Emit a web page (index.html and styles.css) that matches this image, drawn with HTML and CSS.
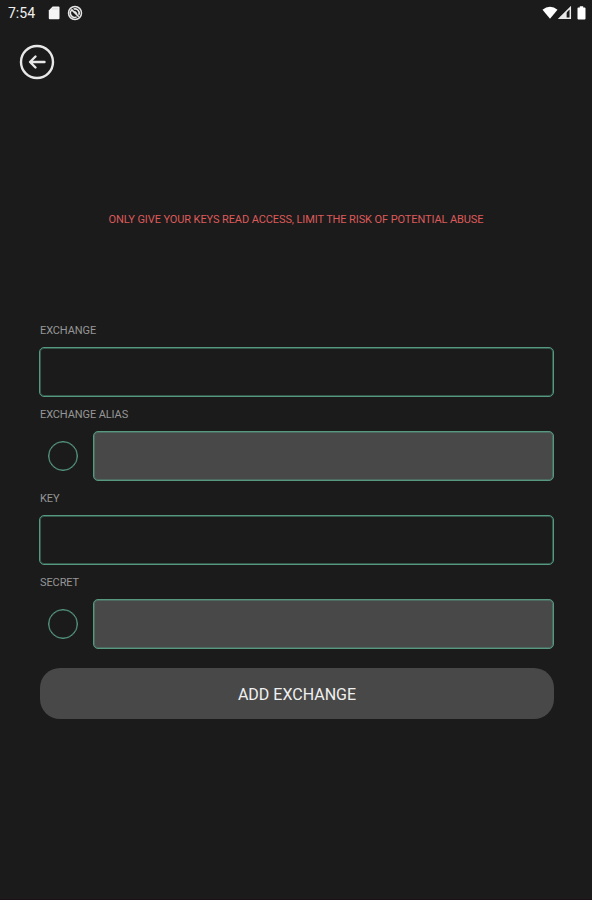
FILE: index.html
```
<!DOCTYPE html>
<html lang="en">

<head>
    <meta charset="UTF-8">
    <meta name="viewport" content="width=device-width, initial-scale=1.0">
    <title>Add Exchange</title>
    <link rel="stylesheet" href="styles.css">
</head>

<body>
    <div class="screen">
        <header class="status">
            <span class="time">7:54</span>
            <!-- sd card -->
            <svg class="sd" width="12" height="14" viewBox="0 0 12 14">
                <path d="M4.6 .5H10.5Q11.5 .5 11.5 1.5V12.2Q11.5 13.2 10.5 13.2H1.8Q.8 13.2 .8 12.2V4.4Z" fill="#f4f4f4" />
                <path d="M5 2v1.500M7 2v1.500M9 2v1.500" stroke="#ccc" stroke-width=".8" />
            </svg>
            <!-- blocked target -->
            <svg class="target" width="16" height="16" viewBox="0 0 16 16" fill="none" stroke="#e6e6e6">
                <circle cx="8" cy="8" r="6.5" stroke-width="1.500" />
                <path d="M4.900 5A4.200 4.200 0 0 0 9.600 11.900M6.600 4.100A4.200 4.200 0 0 1 11.800 9.800" stroke-width="1.600" />
                <path d="M4.400 4.400l7.400 7.400M7.400 6.200l2.500 2.500" stroke-width="1.600" />
            </svg>
            <div class="signals">
                <svg width="16" height="14" viewBox="0 0 16 14">
                    <path d="M8 12.800L.5 3.800Q4 .7 8 .7T15.500 3.800Z" fill="#fff" />
                </svg>
                <svg width="14" height="14" viewBox="0 0 14 14">
                    <path d="M1.600 12.300L12.300 1.600V12.300Z" fill="none" stroke="#e8e8e8" stroke-width="1.500" />
                    <path d="M1 12.600L8.600 5V12.600Z" fill="#e8e8e8" />
                </svg>
                <svg class="battery" width="9" height="14" viewBox="0 0 9 14">
                    <path d="M2.800 .3H6.200V1.600H7.600Q8.500 1.600 8.500 2.500V12.600Q8.500 13.500 7.600 13.500H1.400Q.5 13.500 .5 12.600V2.500Q.5 1.600 1.400 1.600H2.800Z" fill="#fff" />
                </svg>
            </div>
        </header>

        <a class="back" href="javascript:;" aria-label="Back">
            <svg width="36" height="36" viewBox="0 0 36 36" fill="none" stroke="#e8e8e8" stroke-width="2.400" stroke-linecap="round" stroke-linejoin="round">
                <circle cx="18" cy="18" r="16" />
                <path d="M25.500 18H11.200M16.500 12.500L11 18L16.500 23.500" />
            </svg>
        </a>

        <p class="warning">ONLY GIVE YOUR KEYS READ ACCESS, LIMIT THE RISK OF POTENTIAL ABUSE</p>

        <form class="form">
            <label class="label">EXCHANGE</label>
            <div class="row">
                <div class="field"></div>
            </div>
            <label class="label">EXCHANGE ALIAS</label>
            <div class="row">
                <div class="radio"></div>
                <div class="field filled"></div>
            </div>
            <label class="label">KEY</label>
            <div class="row">
                <div class="field"></div>
            </div>
            <label class="label">SECRET</label>
            <div class="row">
                <div class="radio"></div>
                <div class="field filled"></div>
            </div>
            <button class="add" type="button">ADD EXCHANGE</button>
        </form>
    </div>
</body>

</html>
```
FILE: styles.css
```
* {
    margin: 0;
    padding: 0;
    box-sizing: border-box;
}

body {
    background-color: #1b1b1b;
    font-family: Roboto, "Liberation Sans", sans-serif;
}

.screen {
    height: 900px;
    overflow: hidden;
    border-bottom: 1px solid #1a1216;
}

/* status bar */

.status {
    display: flex;
    align-items: center;
    height: 26px;
    padding: 0 6px 0 8px;
}

.time {
    width: 40px;
    color: #f0f0f0;
    font-size: 14px;
}

.target {
    margin-left: 7px;
}

.signals {
    display: flex;
    margin-left: auto;
}

.battery {
    margin-left: 5px;
}

/* back button */

.back {
    display: block;
    width: 36px;
    height: 36px;
    margin: 18px 0 0 19px;
}

.back svg {
    display: block;
}

.warning {
    height: 20px;
    margin-top: 130px;
    color: #dd5a5a;
    font-size: 11px;
    line-height: 20px;
    letter-spacing: -0.1px;
    text-align: center;
    white-space: nowrap;
}

/* form */

.form {
    margin: 83px 38px 0 39px;
}

.label {
    display: block;
    height: 34px;
    padding-left: 1px;
    color: #969696;
    font-size: 11px;
    line-height: 35px;
    letter-spacing: -0.1px;
}

.row {
    display: flex;
    align-items: center;
    height: 50px;
}

.field {
    flex: 1;
    height: 50px;
    border: 1px solid #579880;
    border-radius: 5px;
    box-shadow: inset 0 0 0 1px #33584b;
}

.filled {
    background-color: #484848;
    box-shadow: inset 0 0 0 1px #4c6a5f;
}

.radio {
    width: 30px;
    height: 30px;
    margin: 0 15px 1px 9px;
    border: 1px solid #579880;
    border-radius: 50%;
    box-shadow: inset 0 0 0 0.5px #45806c;
}

.add {
    display: block;
    width: 514px;
    height: 51px;
    margin: 19px 0 0 1px;
    padding-top: 2px;
    border: none;
    border-radius: 20px;
    background-color: #484848;
    color: #f0f0f0;
    font-family: inherit;
    font-size: 16px;
}
```
